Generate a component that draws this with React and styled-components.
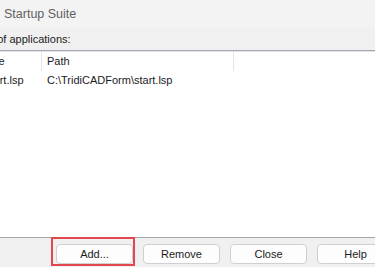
import React from "react";
import styled, { createGlobalStyle } from "styled-components";

const Global = createGlobalStyle`
  html, body { margin: 0; padding: 0; }
  body {
    width: 375px;
    height: 267px;
    overflow: hidden;
    background: #f0f0f0;
    font-family: "Liberation Sans", Arial, sans-serif;
  }
`;

const Frame = styled.div`
  width: 440px;
  margin-left: -30px;
  height: 267px;
  display: flex;
  flex-direction: column;
  background: #f0f0f0;
`;

const TitleBar = styled.div`
  height: 28px;
  display: flex;
  align-items: center;
  padding-left: 34px;
  background: #f3f3f3;
  color: #5f5f5f;
  font-size: 12.5px;
`;

const Label = styled.div`
  height: 22px;
  display: flex;
  align-items: center;
  padding-left: 7px;
  font-size: 11px;
  color: #1b1b1b;
`;

const List = styled.div`
  height: 186px;
  background: #ffffff;
  border-top: 1px solid #a3a8b2;
  box-shadow: inset 0 1px 0 #dfe2e6;
  border-bottom: 1px solid #a5a5a5;
  display: flex;
  flex-direction: column;
`;

const Row = styled.div`
  display: grid;
  grid-template-columns: 72px 192px 1fr;
  height: ${(p) => (p.$header ? "20px" : "18px")};
  font-size: 11px;
  color: #1b1b1b;
`;

const Cell = styled.div`
  display: flex;
  align-items: center;
  padding-left: ${(p) => p.$pad || 5}px;
  border-right: ${(p) => (p.$sep ? "1px solid #e5e5e5" : "none")};
  white-space: nowrap;
`;

const ButtonBar = styled.div`
  flex: 1;
  display: flex;
  align-items: flex-start;
  gap: 10px;
  padding-top: 6px;
  padding-left: 86px;
`;

const Button = styled.div`
  position: relative;
  width: 75px;
  height: 18px;
  border: 1px solid #d0d0d0;
  border-radius: 4px;
  background: #fdfdfd;
  display: flex;
  align-items: center;
  justify-content: center;
  font-size: 11px;
  color: #1b1b1b;
  flex-shrink: 0;

  ${(p) =>
    p.$highlight &&
    `
    &::after {
      content: "";
      position: absolute;
      top: -8px;
      left: -6px;
      right: -3px;
      bottom: -3px;
      border: 2px solid #e2474d;
    }
  `}
`;

export default function App() {
  return (
    <>
      <Global />
      <Frame>
        <TitleBar>Startup Suite</TitleBar>
        <Label>List of applications:</Label>
        <List>
          <Row $header>
            <Cell $sep $pad={17}>File</Cell>
            <Cell $sep>Path</Cell>
            <Cell />
          </Row>
          <Row>
            <Cell $pad={15}>start.lsp</Cell>
            <Cell>C:\TridiCADForm\start.lsp</Cell>
            <Cell />
          </Row>
        </List>
        <ButtonBar>
          <Button $highlight>Add...</Button>
          <Button>Remove</Button>
          <Button>Close</Button>
          <Button>Help</Button>
        </ButtonBar>
      </Frame>
    </>
  );
}
